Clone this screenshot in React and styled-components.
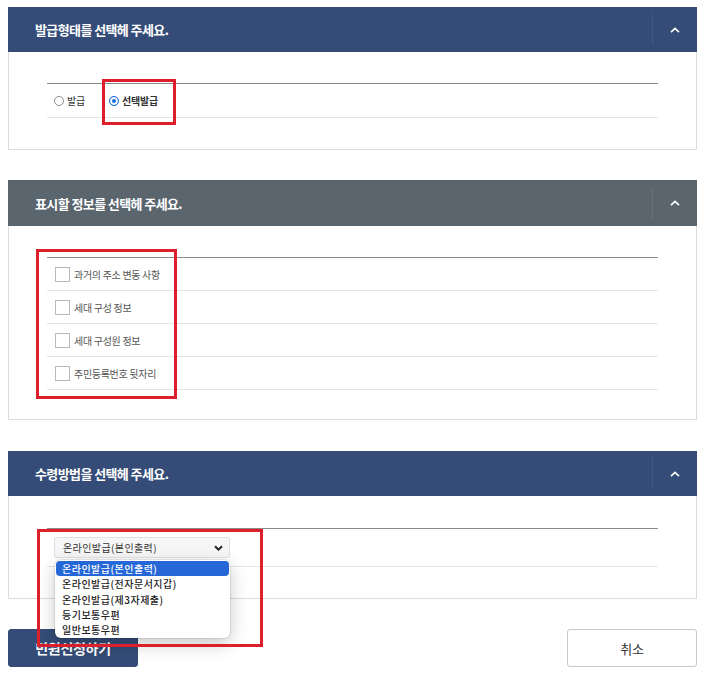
import React from 'react';
import styled, { createGlobalStyle } from 'styled-components';

const GlobalStyle = createGlobalStyle`
  body {
    margin: 0;
    background: #fff;
    font-family: "Noto Sans CJK KR", "Noto Sans", sans-serif;
  }
`;

const Page = styled.div`
  position: relative;
  width: 689px;
  padding: 7px 23px 17px 8px;
`;

const Panel = styled.section`
  margin-bottom: ${({ $gap }) => $gap || 30}px;
`;

const PanelHeader = styled.div`
  display: flex;
  align-items: stretch;
  height: ${({ $h }) => $h || 45}px;
  background: ${({ $tone }) => ($tone === 'slate' ? '#5a656e' : '#344c77')};
`;

const PanelTitle = styled.h2`
  flex: 1;
  margin: 0;
  padding-left: 27px;
  display: flex;
  align-items: center;
  color: #fff;
  font-size: 13px;
  font-weight: 700;
  letter-spacing: -0.6px;
`;

const Toggle = styled.button`
  width: 45px;
  border: none;
  background: transparent;
  display: flex;
  align-items: center;
  justify-content: center;
  position: relative;
  padding: 0;
  cursor: pointer;

  &:before {
    content: '';
    position: absolute;
    left: 0;
    top: 7px;
    bottom: 7px;
    width: 1px;
    background: rgba(255, 255, 255, 0.08);
  }
`;

const PanelBody = styled.div`
  border: 1px solid #dcdcdc;
  border-top: none;
  padding: ${({ $top }) => $top}px 38px ${({ $bottom }) => $bottom}px;
`;

const FieldList = styled.div`
  border-top: 1px solid #8a8a8a;
`;

const Row = styled.div`
  box-sizing: border-box;
  display: flex;
  align-items: center;
  height: ${({ $h }) => $h}px;
  border-bottom: 1px solid #e4e4e4;
  padding-left: ${({ $pad }) => $pad || 0}px;
  gap: ${({ $gap }) => $gap || 0}px;
`;

const RadioLabel = styled.label`
  display: flex;
  align-items: center;
  gap: 3px;
  font-size: 10px;
  color: #333;
  font-weight: ${({ $checked }) => ($checked ? 700 : 400)};
  letter-spacing: -0.2px;
`;

const RadioDot = styled.span`
  width: 10px;
  height: 10px;
  box-sizing: border-box;
  border-radius: 50%;
  border: 1px solid ${({ $checked }) => ($checked ? '#1a6fe0' : '#8f8f8f')};
  background: ${({ $checked }) => ($checked ? '#1a6fe0' : '#fff')};
  box-shadow: ${({ $checked }) => ($checked ? 'inset 0 0 0 2px #fff' : 'none')};
`;

const CheckLabel = styled.label`
  display: flex;
  align-items: center;
  gap: 4px;
  font-size: 10px;
  color: #555;
  letter-spacing: -0.3px;
`;

const CheckBox = styled.span`
  width: 15px;
  height: 15px;
  box-sizing: border-box;
  border: 1px solid #b9b9b9;
  background: #fff;
`;

const SelectWrap = styled.div`
  position: relative;
  margin-left: 7px;
`;

const SelectBox = styled.div`
  width: 176px;
  height: 21px;
  box-sizing: border-box;
  border: 1px solid #e0e0e0;
  border-radius: 2px;
  background: #f6f6f6;
  display: flex;
  align-items: center;
  justify-content: space-between;
  padding: 0 6px 0 8px;
  font-size: 10px;
  letter-spacing: 0.4px;
  color: #333;
`;

const Menu = styled.ul`
  position: absolute;
  top: 23px;
  left: 1px;
  z-index: 2;
  width: 175px;
  margin: 0;
  padding: 1px;
  box-sizing: border-box;
  list-style: none;
  background: #fff;
  border-radius: 6px;
  box-shadow: 0 6px 18px rgba(0, 0, 0, 0.22), 0 0 0 1px rgba(0, 0, 0, 0.08);
`;

const MenuItem = styled.li`
  height: 15.3px;
  line-height: 15.3px;
  padding-left: 6px;
  border-radius: 4px;
  font-size: 10px;
  letter-spacing: 0.5px;
  color: ${({ $active }) => ($active ? '#fff' : '#222')};
  background: ${({ $active }) => ($active ? '#2667d8' : 'transparent')};
  font-weight: 500;
`;

const Actions = styled.div`
  display: flex;
  justify-content: space-between;
`;

const ActionButton = styled.button`
  width: 130px;
  height: 38px;
  border-radius: 3px;
  font-family: inherit;
  font-size: ${({ $primary }) => ($primary ? '14px' : '13px')};
  font-weight: ${({ $primary }) => ($primary ? 700 : 400)};
  color: ${({ $primary }) => ($primary ? '#fff' : '#333')};
  background: ${({ $primary }) => ($primary ? '#344c77' : '#fff')};
  border: 1px solid ${({ $primary }) => ($primary ? '#344c77' : '#c8c8c8')};
  letter-spacing: -0.3px;
`;

const Marker = styled.div`
  position: absolute;
  z-index: 3;
  box-sizing: border-box;
  border: 3px solid #dc1f2a;
  pointer-events: none;
`;

const ChevronUp = () => (
  <svg width="10" height="6" viewBox="0 0 10 6" fill="none">
    <path d="M1 5.2 L5 1.4 L9 5.2" stroke="#fff" strokeWidth="1.6" />
  </svg>
);

const ChevronDown = () => (
  <svg width="9" height="6" viewBox="0 0 9 6" fill="none">
    <path d="M1 1.2 L4.5 4.6 L8 1.2" stroke="#222" strokeWidth="2" />
  </svg>
);

const infoOptions = ['과거의 주소 변동 사항', '세대 구성 정보', '세대 구성원 정보', '주민등록번호 뒷자리'];
const receiveOptions = ['온라인발급(본인출력)', '온라인발급(전자문서지갑)', '온라인발급(제3자제출)', '등기보통우편', '일반보통우편'];

export default function App() {
  return (
    <Page>
      <GlobalStyle />

      <Panel $gap={30}>
        <PanelHeader>
          <PanelTitle>발급형태를 선택헤 주세요.</PanelTitle>
          <Toggle aria-label="접기"><ChevronUp /></Toggle>
        </PanelHeader>
        <PanelBody $top={31} $bottom={31}>
          <FieldList>
            <Row $h={34} $pad={7} $gap={24}>
              <RadioLabel><RadioDot />발급</RadioLabel>
              <RadioLabel $checked><RadioDot $checked />선택발급</RadioLabel>
            </Row>
          </FieldList>
        </PanelBody>
      </Panel>

      <Panel $gap={31}>
        <PanelHeader $tone="slate" $h={46}>
          <PanelTitle>표시할 정보를 선택헤 주세요.</PanelTitle>
          <Toggle aria-label="접기"><ChevronUp /></Toggle>
        </PanelHeader>
        <PanelBody $top={31} $bottom={29}>
          <FieldList>
            {infoOptions.map((label) => (
              <Row key={label} $h={33} $pad={8}>
                <CheckLabel><CheckBox />{label}</CheckLabel>
              </Row>
            ))}
          </FieldList>
        </PanelBody>
      </Panel>

      <Panel $gap={30}>
        <PanelHeader>
          <PanelTitle>수령방법을 선택헤 주세요.</PanelTitle>
          <Toggle aria-label="접기"><ChevronUp /></Toggle>
        </PanelHeader>
        <PanelBody $top={32} $bottom={31}>
          <FieldList>
            <Row $h={38}>
              <SelectWrap>
                <SelectBox>
                  <span>{receiveOptions[0]}</span>
                  <ChevronDown />
                </SelectBox>
                <Menu>
                  {receiveOptions.map((opt, i) => (
                    <MenuItem key={opt} $active={i === 0}>{opt}</MenuItem>
                  ))}
                </Menu>
              </SelectWrap>
            </Row>
          </FieldList>
        </PanelBody>
      </Panel>

      <Actions>
        <ActionButton $primary>민원신청하기</ActionButton>
        <ActionButton>취소</ActionButton>
      </Actions>

      <Marker style={{ left: 102, top: 79, width: 74, height: 46 }} />
      <Marker style={{ left: 36, top: 249, width: 141, height: 150 }} />
      <Marker style={{ left: 37, top: 529, width: 226, height: 118 }} />
    </Page>
  );
}
